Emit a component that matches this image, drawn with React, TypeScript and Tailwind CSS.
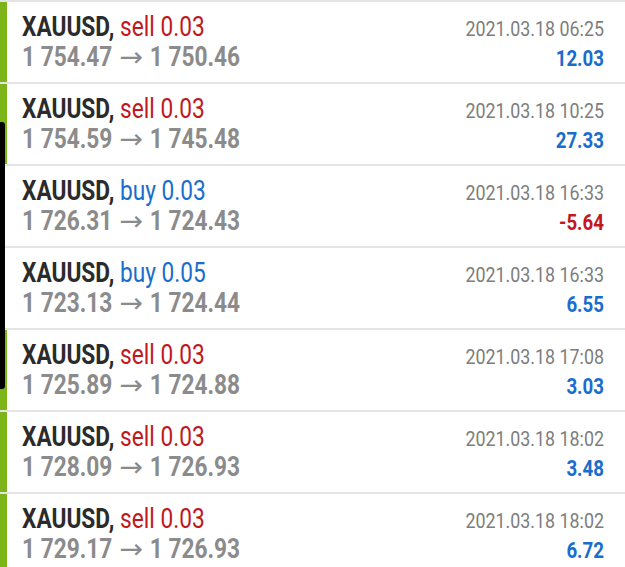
import React from 'react';

interface Trade {
  symbol: string;
  side: 'buy' | 'sell';
  volume: string;
  open: string;
  close: string;
  time: string;
  profit: string;
}

const trades: Trade[] = [
  { symbol: 'XAUUSD', side: 'sell', volume: '0.03', open: '1 754.47', close: '1 750.46', time: '2021.03.18 06:25', profit: '12.03' },
  { symbol: 'XAUUSD', side: 'sell', volume: '0.03', open: '1 754.59', close: '1 745.48', time: '2021.03.18 10:25', profit: '27.33' },
  { symbol: 'XAUUSD', side: 'buy', volume: '0.03', open: '1 726.31', close: '1 724.43', time: '2021.03.18 16:33', profit: '-5.64' },
  { symbol: 'XAUUSD', side: 'buy', volume: '0.05', open: '1 723.13', close: '1 724.44', time: '2021.03.18 16:33', profit: '6.55' },
  { symbol: 'XAUUSD', side: 'sell', volume: '0.03', open: '1 725.89', close: '1 724.88', time: '2021.03.18 17:08', profit: '3.03' },
  { symbol: 'XAUUSD', side: 'sell', volume: '0.03', open: '1 728.09', close: '1 726.93', time: '2021.03.18 18:02', profit: '3.48' },
  { symbol: 'XAUUSD', side: 'sell', volume: '0.03', open: '1 729.17', close: '1 726.93', time: '2021.03.18 18:02', profit: '6.72' },
];

const TradeRow: React.FC<{ trade: Trade }> = ({ trade }) => {
  const sideColor = trade.side === 'sell' ? 'text-[#c1171d]' : 'text-[#1a6dcc]';
  const profitColor = trade.profit.startsWith('-') ? 'text-[#c1171d]' : 'text-[#1a6dcc]';

  return (
    <div className="flex h-[82px] border-t-2 border-[#e4e4e4]">
      <div className={`w-[7px] shrink-0 ${trade.side === 'sell' ? 'bg-[#7cb518]' : 'bg-white'}`} />
      <div className="flex flex-1 justify-between pl-[15px] pr-[21px] pt-[11px]">
        {/* condensed look: Roboto squeezed horizontally */}
        <div className="origin-left scale-x-[0.84] whitespace-nowrap text-[27px] font-bold leading-[29px]">
          <div className="text-[#2b2b2b]">
            {trade.symbol},{' '}
            <span className={`font-normal ${sideColor}`}>
              {trade.side} {trade.volume}
            </span>
          </div>
          <div className="h-[29px] text-[#8b8b8b]">
            {trade.open}
            <span className="mx-[11px] inline-block scale-x-[1.25] font-['DejaVu_Sans',sans-serif] font-normal">→</span>
            {trade.close}
          </div>
        </div>
        <div className="flex origin-right scale-x-[0.85] flex-col items-end whitespace-nowrap pt-[2px] leading-[29px]">
          <div className="text-[21px] text-[#7d7d7d]">{trade.time}</div>
          <div className={`text-[22px] font-bold ${profitColor}`}>{trade.profit}</div>
        </div>
      </div>
    </div>
  );
};

const App: React.FC = () => {
  return (
    <div className="relative h-[567px] w-[625px] overflow-hidden bg-white font-['Roboto',sans-serif]">
      {trades.map((t, i) => (
        <TradeRow key={i} trade={t} />
      ))}
      <div className="absolute left-0 top-[122px] h-[267px] w-[5px] rounded-r-[3px] bg-black" />
    </div>
  );
};

export default App;
